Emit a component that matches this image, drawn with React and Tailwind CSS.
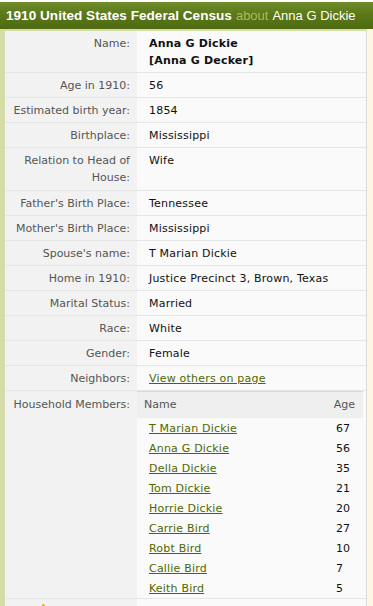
const rows = [
  { label: 'Age in 1910:', value: '56' },
  { label: 'Estimated birth year:', value: '1854' },
  { label: 'Birthplace:', value: 'Mississippi' },
  { label: ['Relation to Head of', 'House:'], value: 'Wife', tall: true },
  { label: "Father's Birth Place:", value: 'Tennessee' },
  { label: "Mother's Birth Place:", value: 'Mississippi' },
  { label: "Spouse's name:", value: 'T Marian Dickie' },
  { label: 'Home in 1910:', value: 'Justice Precinct 3, Brown, Texas' },
  { label: 'Marital Status:', value: 'Married' },
  { label: 'Race:', value: 'White' },
  { label: 'Gender:', value: 'Female' },
]

const household = [
  { name: 'T Marian Dickie', age: 67 },
  { name: 'Anna G Dickie', age: 56 },
  { name: 'Della Dickie', age: 35 },
  { name: 'Tom Dickie', age: 21 },
  { name: 'Horrie Dickie', age: 20 },
  { name: 'Carrie Bird', age: 27 },
  { name: 'Robt Bird', age: 10 },
  { name: 'Callie Bird', age: 7 },
  { name: 'Keith Bird', age: 5 },
]

function Row({ label, tall, children }) {
  return (
    <div className="grid grid-cols-[132px_1fr] border-b border-[#e6e6e6]">
      <div
        className={
          tall
            ? 'bg-[#f2f2f2] pb-[4px] pr-[7px] pt-[4px] text-right text-[#555555]'
            : 'bg-[#f2f2f2] pb-[3px] pr-[7px] pt-[4px] text-right text-[#555555]'
        }
      >
        {Array.isArray(label)
          ? label.map((line) => <div key={line}>{line}</div>)
          : label}
      </div>
      <div className="pb-[3px] pl-[12px] pt-[4px] tracking-[0.2px] text-[#111111]">{children}</div>
    </div>
  )
}

export default function App() {
  return (
    <div className="h-[606px] w-[373px] overflow-hidden bg-white font-['DejaVu_Sans',Verdana,sans-serif] text-[11px] leading-[17px]">
      <div className="mt-[2px] flex h-[27px] items-center bg-gradient-to-b from-[#6f8c2b] via-[#5a7718] to-[#4f6a12] pl-[6px] font-['Liberation_Sans',Arial,sans-serif] text-[13px] text-white">
        <span className="text-[13.6px] font-bold">1910 United States Federal Census</span>
        <span className="ml-[4px] text-[#a9bf5c]">about</span>
        <span className="ml-[4px]">Anna G Dickie</span>
      </div>

      <div className="flex">
        <div className="w-[367px] border-l-[5px] border-r border-t-[2px] border-[#d6dca8] border-r-[#dcdcdc] bg-[#fafafa]">
          <Row label="Name:">
            <div className="font-bold">Anna G Dickie</div>
            <div className="font-bold">[Anna G Decker]</div>
          </Row>
          {rows.map((row) => (
            <Row key={row.value + row.label} label={row.label} tall={row.tall}>
              {row.value}
            </Row>
          ))}
          <Row label="Neighbors:">
            <a href="#" className="text-[#4e6800] underline">
              View others on page
            </a>
          </Row>

          <div className="grid grid-cols-[132px_1fr] border-b border-[#e6e6e6]">
            <div className="bg-[#f2f2f2] pr-[7px] pt-[5px] text-right text-[#555555]">Household Members:</div>
            <div className="mr-[3px]">
              <div className="grid grid-cols-[1fr_33px] border-t border-[#d9d9d9] bg-[#efefef] pb-[5px] pt-[4px] text-[#555555]">
                <span className="pl-[7px]">Name</span>
                <span className="pr-[8px] text-right">Age</span>
              </div>
              {household.map((m) => (
                <div key={m.name} className="grid h-[20px] grid-cols-[1fr_33px] items-center">
                  <a href="#" className="pl-[12px] tracking-[0.2px] text-[#4e6800] underline">
                    {m.name}
                  </a>
                  <span className="pl-[6px] text-[#111111]">{m.age}</span>
                </div>
              ))}
            </div>
          </div>

          <div className="grid grid-cols-[132px_1fr]">
            <div className="h-[20px] bg-[#f2f2f2] pl-[37px] pt-[5px]">
              <span className="block h-[4px] w-[3px] rounded-t-full bg-[#e8b020]" />
            </div>
            <div />
          </div>
        </div>
        <div className="flex-1 bg-[#fcf7e2]" />
      </div>
    </div>
  )
}
